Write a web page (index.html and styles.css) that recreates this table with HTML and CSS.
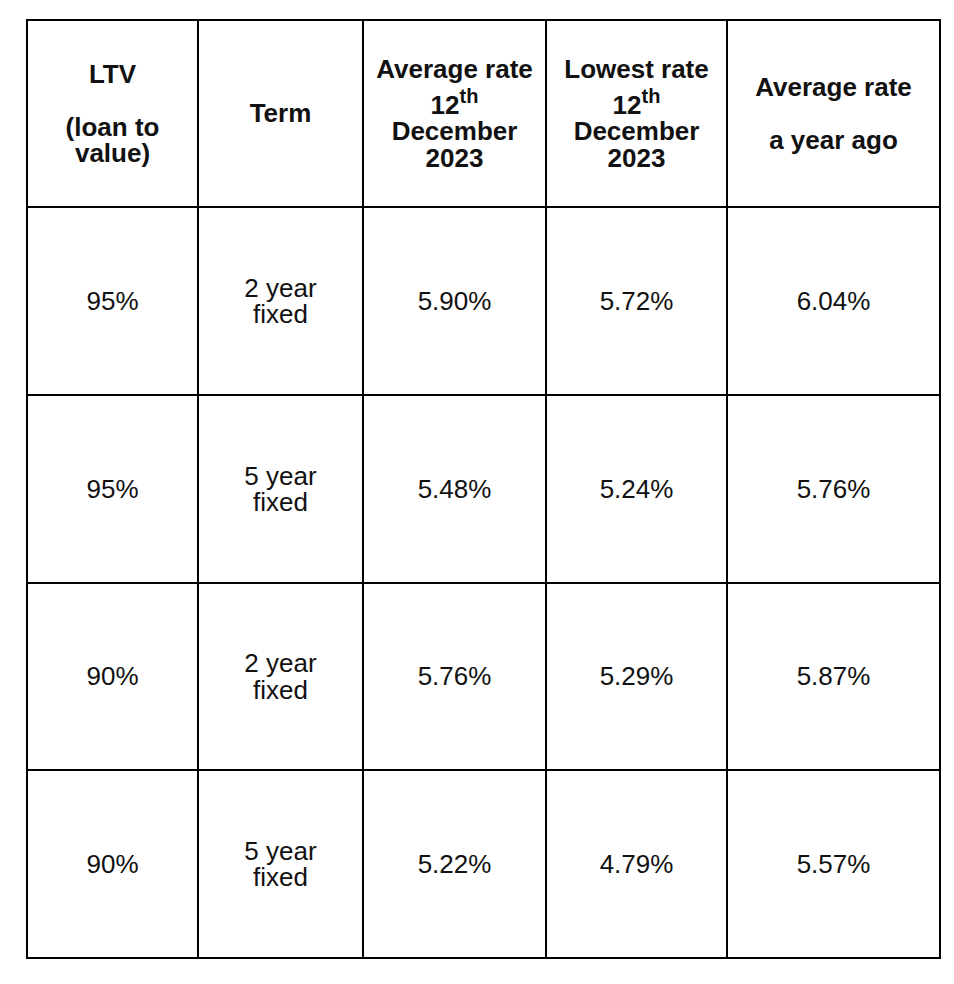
FILE: index.html
```html
<!DOCTYPE html>
<html lang="en">
<head>
<meta charset="utf-8">
<title>Mortgage rates</title>
<link rel="stylesheet" href="styles.css">
</head>
<body>
<div class="rates">
  <div class="cell head"><p class="txt">LTV<br><br>(loan to<br>value)</p></div>
  <div class="cell head"><p class="txt">Term</p></div>
  <div class="cell head"><p class="txt">Average rate<br>12<sup>th</sup><br>December<br>2023</p></div>
  <div class="cell head"><p class="txt">Lowest rate<br>12<sup>th</sup><br>December<br>2023</p></div>
  <div class="cell head"><p class="txt">Average rate<br><br>a year ago</p></div>

  <div class="cell"><p class="txt">95%</p></div>
  <div class="cell"><p class="txt">2 year<br>fixed</p></div>
  <div class="cell"><p class="txt">5.90%</p></div>
  <div class="cell"><p class="txt">5.72%</p></div>
  <div class="cell"><p class="txt">6.04%</p></div>

  <div class="cell"><p class="txt">95%</p></div>
  <div class="cell"><p class="txt">5 year<br>fixed</p></div>
  <div class="cell"><p class="txt">5.48%</p></div>
  <div class="cell"><p class="txt">5.24%</p></div>
  <div class="cell"><p class="txt">5.76%</p></div>

  <div class="cell"><p class="txt">90%</p></div>
  <div class="cell"><p class="txt">2 year<br>fixed</p></div>
  <div class="cell"><p class="txt">5.76%</p></div>
  <div class="cell"><p class="txt">5.29%</p></div>
  <div class="cell"><p class="txt">5.87%</p></div>

  <div class="cell"><p class="txt">90%</p></div>
  <div class="cell"><p class="txt">5 year<br>fixed</p></div>
  <div class="cell"><p class="txt">5.22%</p></div>
  <div class="cell"><p class="txt">4.79%</p></div>
  <div class="cell"><p class="txt">5.57%</p></div>
</div>
</body>
</html>
```
FILE: styles.css
```css
html, body {
  margin: 0;
  background: #ffffff;
}

body {
  padding: 19px 0 0 26px;
  font-family: "Liberation Sans", Arial, Helvetica, sans-serif;
  color: #111111;
}

.rates {
  display: grid;
  grid-template-columns: 171px 165px 183px 181px 213px;
  grid-template-rows: 187px 188px 188px 187px 188px;
  width: max-content;
  border-left: 2px solid #000;
  border-top: 2px solid #000;
}

.cell {
  box-sizing: border-box;
  border-right: 2px solid #000;
  border-bottom: 2px solid #000;
  display: flex;
  align-items: center;
  justify-content: center;
  text-align: center;
  font-size: 26px;
  line-height: 26.5px;
}

.txt {
  margin: 0;
}

.head {
  font-weight: bold;
}

.head sup {
  font-size: 20px;
  line-height: 26.5px;
  vertical-align: 11px;
}
```
